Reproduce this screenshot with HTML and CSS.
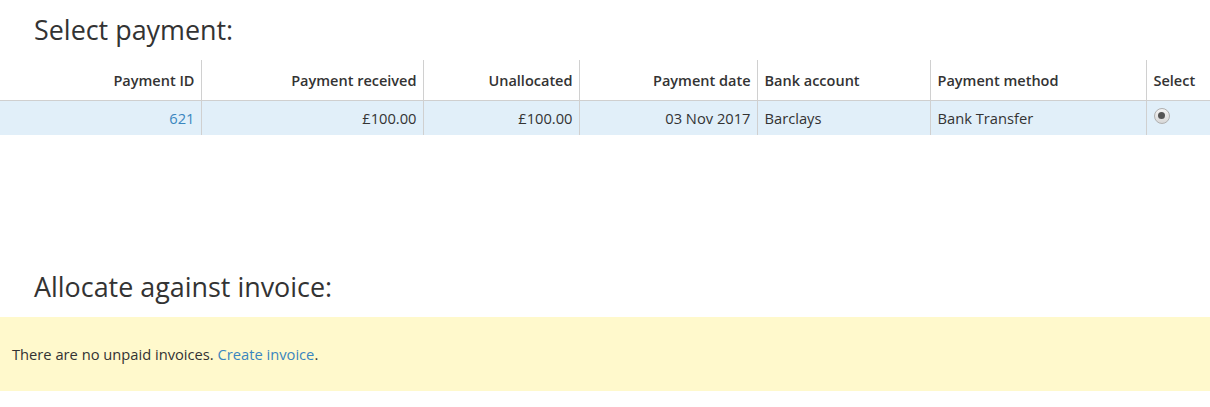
FILE: index.html
```html
<!DOCTYPE html>
<html>
<head>
<meta charset="utf-8">
<link rel="stylesheet" href="styles.css">
</head>
<body>
<h2 class="title">Select payment:</h2>
<table class="payments">
  <colgroup>
    <col class="c1"><col class="c2"><col class="c3"><col class="c4"><col class="c5"><col class="c6"><col class="c7">
  </colgroup>
  <thead>
    <tr>
      <th class="r">Payment ID</th>
      <th class="r">Payment received</th>
      <th class="r">Unallocated</th>
      <th class="r">Payment date</th>
      <th>Bank account</th>
      <th>Payment method</th>
      <th>Select</th>
    </tr>
  </thead>
  <tbody>
    <tr>
      <td class="r"><a href="#">621</a></td>
      <td class="r">£100.00</td>
      <td class="r">£100.00</td>
      <td class="r">03 Nov 2017</td>
      <td>Barclays</td>
      <td>Bank Transfer</td>
      <td><span class="radio"><span class="dot"></span></span></td>
    </tr>
  </tbody>
</table>
<h2 class="title second">Allocate against invoice:</h2>
<div class="notice">There are no unpaid invoices. <a href="#">Create invoice</a>.</div>
</body>
</html>
```
FILE: styles.css
```css
html, body {
  margin: 0;
  padding: 0;
  background: #fff;
}
body {
  font-family: "Open Sans", "Liberation Sans", sans-serif;
  font-size: 14.7px;
  color: #333;
}
a {
  color: #3a86bf;
  text-decoration: none;
}
.title {
  margin: 12px 0 12px 34px;
  font-size: 26.9px;
  font-weight: 400;
  line-height: 36px;
  color: #333;
}
.title.second {
  margin-top: 134px;
}
.payments {
  width: 1210px;
  border-collapse: collapse;
  table-layout: fixed;
}
.c1 { width: 201px; }
.c2 { width: 222px; }
.c3 { width: 156px; }
.c4 { width: 178px; }
.c5 { width: 173px; }
.c6 { width: 216px; }
.c7 { width: 64px; }
.payments th,
.payments td {
  padding: 0 6px 0 7px;
  text-align: left;
  white-space: nowrap;
  overflow: hidden;
  border-left: 1px solid #d0d0d0;
}
.payments th:first-child,
.payments td:first-child {
  border-left: none;
}
.payments th {
  height: 40px;
  font-size: 14.5px;
  font-weight: 600;
  border-bottom: 1px solid #cfcfcf;
  vertical-align: middle;
}
.payments td {
  height: 33px;
  background: #e1eff9;
  padding-bottom: 1px;
}
.payments .r {
  text-align: right;
}
.radio {
  display: inline-flex;
  align-items: center;
  justify-content: center;
  width: 16px;
  height: 16px;
  border-radius: 50%;
  border: 1px solid #b0b0b0;
  background: linear-gradient(#f4f4f4, #d8d8d8);
  box-sizing: border-box;
  vertical-align: middle;
  margin-bottom: 5px;
}
.dot {
  width: 7px;
  height: 7px;
  border-radius: 50%;
  background: #555;
}
.notice {
  background: #fff9cc;
  padding: 27px 12px;
  line-height: 20px;
  height: 20px;
}
```
